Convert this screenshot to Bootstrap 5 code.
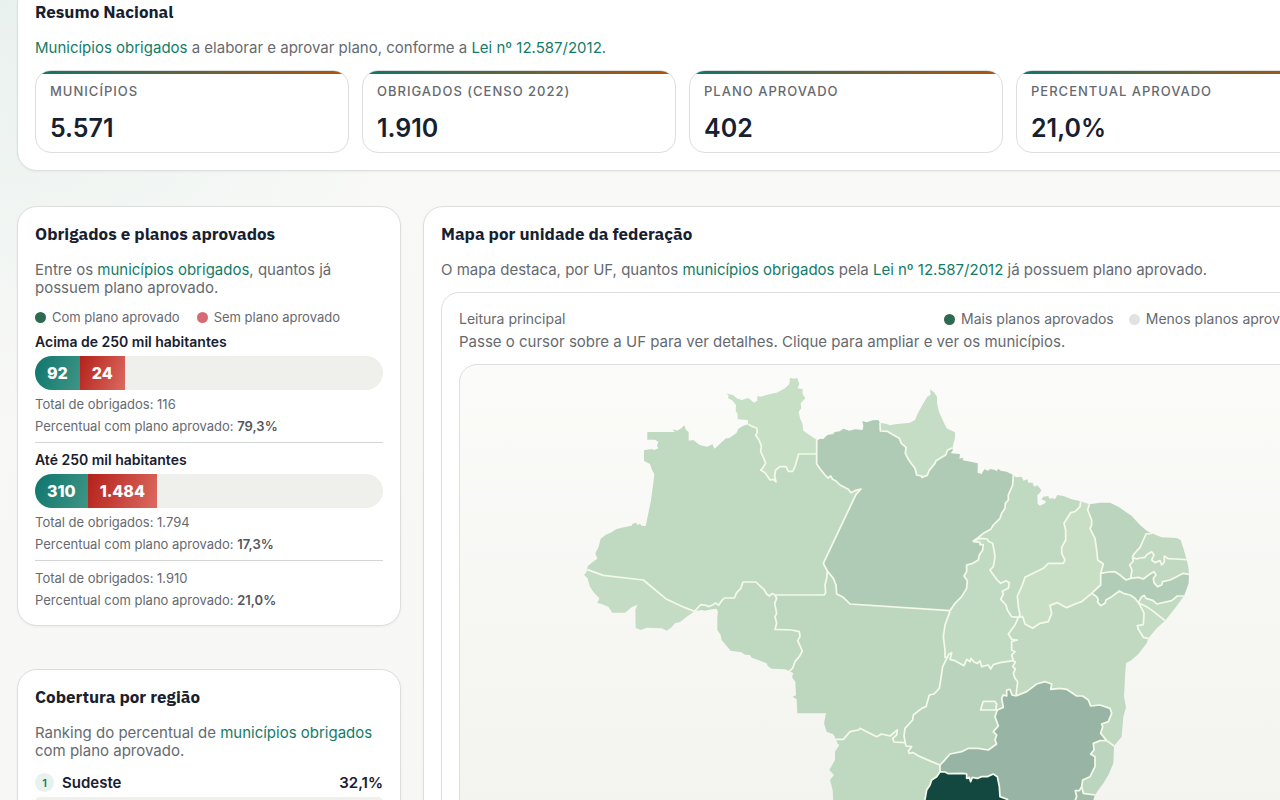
<!DOCTYPE html>
<html lang="pt-BR">
<head>
<meta charset="utf-8">
<meta name="viewport" content="width=device-width, initial-scale=1">
<title>Resumo Nacional</title>
<link href="https://cdn.jsdelivr.net/npm/bootstrap@5.3.0/dist/css/bootstrap.min.css" rel="stylesheet">
<style>
  :root { --ink: #17202f; --soft: #666a70; --brand: #137c68; --line: #dcdfde; }
  body {
    font-family: Inter, "Liberation Sans", sans-serif; font-size: 14px; line-height: 18px; color: var(--soft);
    background: radial-gradient(circle at 0 0, #e9f1ee 0, rgba(233,241,238,0) 420px), linear-gradient(#f9faf8, #f7f7f5);
  }
  a { color: var(--brand); text-decoration: none; }
  .page-shell { margin: -16px -68px 0 17px; }
  .panel { background: #fff; border: 1px solid var(--line); border-radius: 20px; padding: 17px; box-shadow: 0 1px 3px rgba(23,32,47,.05); }
  .panel-title { font-family: "IBM Plex Sans", "Noto Sans", sans-serif; font-size: 17px; line-height: 20px; font-weight: 700; color: var(--ink); margin: 0 0 17px; }
  .lead-text { font-size: 15px; line-height: 18px; margin: 0; }
  .stat-grid { display: grid; grid-template-columns: repeat(4, 1fr); gap: 13px; margin-top: 13px; }
  .stat { border: 1px solid var(--line); border-radius: 16px; padding: 11px 14px 9px; position: relative; overflow: hidden; }
  .stat::before { content: ""; position: absolute; inset: 0 0 auto; height: 3px; background: linear-gradient(90deg, #0f766e, #b45309); }
  .stat dt { font-size: 13px; line-height: 18px; font-weight: 500; letter-spacing: 1px; text-transform: uppercase; }
  .stat dd { font-size: 25px; line-height: 30px; font-weight: 600; color: var(--ink); margin: 13px 0 0; }
  .main-grid { display: grid; grid-template-columns: 384px 1fr; gap: 22px; margin-top: 35px; }
  .side-stack { gap: 43px; }
  .dot { width: 11px; height: 11px; border-radius: 50%; flex: none; }
  .dot-yes { background: #2d6a4f; } .dot-no { background: #d56c75; } .dot-few { background: #dfe3e1; }
  .key-list { font-size: 13px; line-height: 18px; gap: 17px; margin: 11px 0 7px; }
  .key-list li { display: flex; align-items: center; gap: 6px; }
  .group-title { font-size: 14px; line-height: 18px; font-weight: 600; color: var(--ink); margin: 0 0 5px; }
  .split-bar { display: flex; height: 34px; border-radius: 17px; overflow: hidden; background: #efefeb; margin-bottom: 3px; }
  .split-bar span { display: flex; align-items: center; padding: 0 12px; color: #fff; font-weight: 800; font-size: 16px; }
  .bar-yes { background: linear-gradient(110deg, #0f766e, #3f9585); }
  .bar-no { background: linear-gradient(110deg, #b3211a, #dc6a60); }
  .fact { font-size: 13px; line-height: 22px; margin: 0; }
  .fact strong { font-weight: 600; color: #54575d; }
  .rule { border-top: 1px solid #d3d6d5; margin-top: 5px; padding-top: 8px; }
  .rule-total { padding-top: 6px; margin-bottom: -3px; }
  .rank-row { font-size: 15px; line-height: 18px; font-weight: 600; color: var(--ink); margin-top: 13px; }
  .rank-no { width: 19px; height: 19px; border-radius: 50%; background: #e7f2ef; color: var(--brand); font-size: 11px; }
  .rank-bar { height: 10px; border-radius: 5px; background: #efefeb; margin-top: 5px; }
  .map-card { border: 1px solid var(--line); border-radius: 18px; padding: 17px; margin-top: 13px; }
  .map-frame { border: 1px solid var(--line); border-radius: 18px; overflow: hidden; margin-top: 13px; background: linear-gradient(#fbfbf9, #f1f1ed 560px); }
  .map-note { font-size: 14px; line-height: 18px; }
  .map-key { gap: 15px; margin: 0; }
  .map-hint { margin: 5px 0 0; }
  #mapa { display: block; width: 100%; }
</style>
</head>
<body>
<main class="vh-100 overflow-hidden">
<div class="d-flex flex-column"><div class="page-shell">

  <section class="panel">
    <h2 class="panel-title">Resumo Nacional</h2>
    <p class="lead-text"><a href="#obrigados">Municípios obrigados</a> a elaborar e aprovar plano, conforme a <a href="#lei">Lei nº 12.587/2012</a>.</p>
    <dl class="stat-grid mb-0">
      <div class="stat"><dt>Municípios</dt><dd>5.571</dd></div>
      <div class="stat"><dt>Obrigados (Censo 2022)</dt><dd>1.910</dd></div>
      <div class="stat"><dt>Plano aprovado</dt><dd>402</dd></div>
      <div class="stat"><dt>Percentual aprovado</dt><dd>21,0%</dd></div>
    </dl>
  </section>

  <div class="main-grid">
    <div class="side-stack d-flex flex-column">
      <section class="panel" id="obrigados">
        <h2 class="panel-title">Obrigados e planos aprovados</h2>
        <p class="lead-text">Entre os <a href="#obrigados">municípios obrigados</a>, quantos já possuem plano aprovado.</p>
        <ul class="key-list list-unstyled d-flex">
          <li><span class="dot dot-yes"></span>Com plano aprovado</li>
          <li><span class="dot dot-no"></span>Sem plano aprovado</li>
        </ul>
        <h3 class="group-title">Acima de 250 mil habitantes</h3>
        <div class="split-bar"><span class="bar-yes">92</span><span class="bar-no">24</span></div>
        <p class="fact">Total de obrigados: 116</p>
        <p class="fact">Percentual com plano aprovado: <strong>79,3%</strong></p>
        <div class="rule">
          <h3 class="group-title">Até 250 mil habitantes</h3>
          <div class="split-bar"><span class="bar-yes">310</span><span class="bar-no">1.484</span></div>
          <p class="fact">Total de obrigados: 1.794</p>
          <p class="fact">Percentual com plano aprovado: <strong>17,3%</strong></p>
        </div>
        <div class="rule rule-total">
          <p class="fact">Total de obrigados: 1.910</p>
          <p class="fact">Percentual com plano aprovado: <strong>21,0%</strong></p>
        </div>
      </section>

      <section class="panel flex-grow-1">
        <h2 class="panel-title">Cobertura por região</h2>
        <p class="lead-text">Ranking do percentual de <a href="#obrigados">municípios obrigados</a> com plano aprovado.</p>
        <div class="rank-row d-flex align-items-center gap-2">
          <span class="rank-no d-flex align-items-center justify-content-center">1</span>
          <span>Sudeste</span><span class="ms-auto">32,1%</span>
        </div>
        <div class="rank-bar"></div>
      </section>
    </div>

    <section class="panel">
      <h2 class="panel-title">Mapa por unidade da federação</h2>
      <p class="lead-text">O mapa destaca, por UF, quantos <a href="#obrigados">municípios obrigados</a> pela <a href="#lei">Lei nº 12.587/2012</a> já possuem plano aprovado.</p>
      <div class="map-card" id="lei">
        <div class="d-flex justify-content-between">
          <span class="map-note">Leitura principal</span>
          <ul class="key-list map-note map-key list-unstyled d-flex">
            <li><span class="dot dot-yes"></span>Mais planos aprovados</li>
            <li><span class="dot dot-few"></span>Menos planos aprovados</li>
          </ul>
        </div>
        <p class="lead-text map-hint">Passe o cursor sobre a UF para ver detalhes. Clique para ampliar e ver os municípios.</p>
        <div class="map-frame">
          <svg id="mapa" viewBox="1380 1095 2553 2100" role="img" aria-label="Mapa do Brasil por unidade da federação">
            <g id="ufs"></g>
            <path id="divisas" fill="none" stroke="#f4f9ea" stroke-width="5.2" stroke-linejoin="round"/>
          </svg>
        </div>
      </div>
    </section>
  </div>
</div></div>
</main>

<script src="https://cdn.jsdelivr.net/npm/bootstrap@5.3.0/dist/js/bootstrap.bundle.min.js"></script>
<script>
  // Boundary arcs, shared by neighbouring states. Points are relative to the origin of their tile.
  const tiles = { A: [1710, 1110], B: [2400, 1110], C: [2940, 1380], D: [2100, 1740], E: [2700, 1800] };
  // Names that start with "x" are outer edges and get no border line.
  const arcs = {
    xAM: 'A 535,163 520,167 505,176 500,188 488,197 478,204 468,205 458,214 443,228 433,236 427,222 413,230 400,228 388,224 370,210 356,212 356,186 348,180 343,166 335,174 322,182 307,177 315,186 232,186 232,209 255,209 265,216 261,228 265,235 253,240 245,237 222,241 222,273 240,282 246,300 253,312 250,340 243,390 235,430 227,468 215,467 210,462 200,465 200,458 188,461 185,467 155,473 138,478 125,487 108,494 92,506 86,530 76,550 82,566 68,576 54,588 50,598',
    AM_AC: 'A 50,598 100,616 220,630 290,688 345,713 374,724',
    xAC: 'A 50,598 50,606 42,614 52,624 60,650 72,668 88,685 82,699 95,702 115,710 127,728 165,728 185,712 202,704 196,720 197,774 212,780 230,773 275,775 290,782 305,772 315,760 330,756 350,740 374,724',
    AM_RO: 'A 374,724 388,708 393,704 408,706 415,710 428,705 437,699 446,706 455,692 463,684 493,684 500,668 512,656 519,636 558,636 570,648 582,658 590,672 598,678 606,671 615,675',
    AM_MT: 'A 615,675 762,675 767,668 765,645 770,625 772,603',
    AM_PA: 'B 82,603 70,580 168,373 183,357 165,362 153,368 145,358 120,345 108,333 98,328 92,318 84,324 75,315 60,296 50,282 50,252',
    RR_AM: 'A 535,163 548,170 560,174 562,188 557,195 567,210 574,228 572,244 580,262 587,280 578,294 572,300 585,308 600,330 610,328 618,336 614,318 617,300 630,290 648,290 655,304 668,304 675,290 686,252 740,252',
    xRR: 'A 535,163 533,150 503,148 503,132 497,122 498,105 488,92 474,84 476,76 468,70 490,76 500,85 515,90 535,84 552,98 562,92 562,78 572,80 600,72 620,68 645,55 658,42 660,24 672,26 682,24 688,42 683,55 698,58 698,72 706,85 692,100 694,115 686,125 690,145 697,160 700,182 715,193 735,206 740,206',
    RR_PA: 'A 740,206 740,252',
    xPA1: 'B 50,212 60,206 70,207 82,195 100,192 104,186 120,184 130,176 148,182 165,178 188,180 190,168 187,153 200,157 218,151 235,150 240,158',
    AP_PA: 'B 240,158 241,183 262,184 275,192 298,205 304,220 318,232 316,250 325,268 335,282 345,295 350,315 365,318 365,322 382,316 387,302 405,280 408,272 425,262 437,255 443,240 458,233',
    xAP: 'B 240,158 260,162 270,166 285,163 330,158 345,150 352,133 370,100 382,80 392,74 390,58 403,68 411,80 411,100 417,125 428,150 440,175 465,187 465,205 460,222 458,233',
    xPA2: 'B 458,233 458,242 452,250 480,252 478,266 490,263 488,271 505,274 533,280 533,308 545,312 553,298 565,302 570,297 585,300 590,304 595,296 602,302 620,305 640,315',
    PA_MA: 'B 640,315 638,345 625,375 625,390 616,400 615,415 605,430 600,445 580,465 572,478 550,490 535,502 518,514',
    PA_TO: 'B 518,514 540,517 540,524 550,524 548,540 538,555 535,570 518,580 500,585 500,605 492,618 502,632 500,655 485,680 465,700 450,722',
    MA_TO: 'B 518,514 540,505 562,507 565,514 578,520 582,540 585,560 580,590 570,600 578,612 590,628 602,640 618,632 628,638 625,655 607,664 610,672 602,688 618,705 622,720 635,740 655,742',
    PA_MT: 'B 82,603 100,625 108,645 110,672 130,682 150,702 450,722',
    xMA: 'C 100,45 108,52 125,50 130,62 142,58 145,68 158,68 162,80 172,76 184,90 180,98 172,105 173,132 180,137 195,130 198,124 184,118 190,110 205,108 208,116 220,115 225,118 232,105 250,108 275,118 302,124',
    MA_PI: 'C 302,124 300,140 285,155 272,158 252,190 257,210 257,240 245,262 245,280 255,300 250,310 205,310 190,325 135,352 125,380 112,408 115,440 120,465 115,472',
    xPI: 'C 302,124 328,133',
    PI_CE: 'C 328,133 323,150 335,180 335,195 330,205 345,235 350,270 353,300 370,312 362,340',
    xCE: 'C 328,133 360,128 390,128 415,140 455,168 480,195 500,212 515,220',
    CE_RN: 'C 515,220 498,222 490,240 480,262 462,282 457,292',
    CE_PB: 'C 457,292 460,303 449,315 456,330 452,355',
    CE_PE: 'C 362,340 385,336 405,335 420,345 438,360 452,355',
    xRN: 'C 515,220 545,232 590,234 602,240 610,265 620,299',
    RN_PB: 'C 457,292 470,297 480,294 495,292 500,284 515,275 522,285 515,300 525,308 540,302 545,315 553,306 553,288 565,296 585,297 620,299',
    xPB: 'C 620,299 625,320 627,343',
    PB_PE: 'C 452,355 475,352 490,357 510,342 522,335 528,345 520,355 522,368 532,380 545,375 548,365 570,360 590,350 610,340 627,343',
    xPE: 'C 627,343 626,370 612,408',
    PE_AL: 'C 475,428 485,410 493,406 498,415 520,422 530,432 575,422 592,408 612,408',
    xAL: 'C 612,408 585,445 555,482',
    AL_SE: 'C 475,428 500,440 525,458 555,482',
    xSE: 'C 555,482 530,505 505,535',
    SE_BA: 'C 475,428 485,445 492,460 490,494 472,497 475,508 490,532 505,535',
    PE_BA: 'C 335,400 350,410 355,420 352,425 362,437 375,430 378,420 395,410 418,393 430,400 450,405 465,415 475,428',
    PI_PE: 'C 362,340 362,375 335,400',
    PI_BA: 'C 335,400 305,425 285,432 260,443 232,428 210,436 215,460 205,485 180,490 158,505 135,492 128,470 115,472',
    xBA: 'E 745,115 740,130 715,162 695,180 678,190 675,230 672,290 678,322 670,350 665,410 642,438',
    TO_BA: 'E 355,52 345,75 325,102 335,118 352,120 335,124 335,150 345,155 335,165 340,182',
    GO_BA: 'E 340,182 346,186 338,200 346,207 340,220 345,235 353,245 350,270 348,288',
    TO_GO: 'E 142,172 147,162 155,158 150,178 165,182 192,197 200,178 210,185 213,175 222,186 232,190 240,183 245,200 265,195 272,207 280,194 300,188 340,182',
    MT_TO: 'E 150,34 135,75 130,110 135,150 135,172 142,172',
    MT_GO: 'E 142,172 128,200 122,240 118,265 102,282 88,285 78,320 65,325 40,345 38,360 15,385 12,408 16,428',
    MT_MS: 'D 408,478 430,478 450,455 475,450 480,445 530,470 545,462 570,468 592,450 590,465 578,475 582,486 616,488',
    MS_GO: 'E 16,428 18,438 35,440 25,454 28,460 40,458 60,470 95,485 120,495',
    GO_MG: 'E 120,495 130,485 150,462 185,455 205,445 235,445 265,450 290,432 285,420 290,405 280,395 295,378 285,350 292,330 310,322 305,295 310,285 320,288 320,270 330,268 336,285 348,288',
    DF: 'E 250,304 284,304 290,312 287,330 242,330 245,318 250,304',
    BA_MG: 'E 348,288 380,275 410,252 435,245 455,252 452,268 480,265 500,268 530,288 548,288 565,300 572,318 600,315 630,325 635,340 625,365 605,372 608,380 602,400 620,422',
    MG_ES: 'E 620,422 600,422 580,430 582,450 572,462 585,470 585,500 570,530 548,540 545,560',
    BA_ES: 'E 620,422 642,438',
    xES: 'E 642,438 640,490 625,525 610,550 595,570 585,585',
    ES_RJ: 'E 545,560 550,580 585,585',
    MG_RJ: 'E 545,560 538,572 526,572 530,590 520,615',
    xRJ: 'E 585,585 575,615',
    MG_SP: 'E 120,515 135,516 145,521 190,520 200,522 200,535 208,532 212,545 217,532 232,535 245,530 262,530 280,522 292,530 298,560 300,590 322,598 330,615',
    MS_MG: 'E 120,495 120,515',
    MS_SP: 'E 120,515 110,530 95,540 90,555 80,570 72,615',
    MT_RO: 'D 225,45 230,55 224,70 230,100 225,110 230,130 225,148 275,150 298,155 300,170 293,182 307,213 298,230 285,245 278,265 268,273',
    xRO: 'D -16,94 5,90 15,92 35,88 50,86 54,96 52,110 52,150 62,165 65,180 80,198 92,212 125,217 135,224 150,225 155,233 175,240 200,250 203,258 215,266 255,268 268,273',
    xMT: 'D 268,273 280,280 276,292 286,305 288,346 278,350 290,358 292,400 378,400 372,430 380,455 400,463 408,478',
    xMS: 'D 408,478 412,490 418,495 405,515 405,540 388,570 402,585 390,600 398,630 400,670'
  };
  // Each state: fill and ring of arcs; "-" reverses an arc.
  const states = {
    AM: ['#c0d9c1', 'xAM AM_AC AM_RO AM_MT AM_PA -RR_AM'],
    AC: ['#c5dcc4', 'xAC -AM_AC'],
    RR: ['#c7dfc5', 'xRR RR_PA -RR_AM'],
    RO: ['#bfd8c0', 'AM_RO MT_RO -xRO'],
    PA: ['#afcbb6', 'xPA1 AP_PA xPA2 PA_MA PA_TO -PA_MT AM_PA'],
    AP: ['#c5ddc4', 'xAP -AP_PA'],
    MT: ['#bdd7be', 'AM_MT PA_MT MT_TO MT_GO -MT_MS -xMT -MT_RO'],
    TO: ['#c1dac2', 'MA_TO TO_BA -TO_GO -MT_TO -PA_TO'],
    MA: ['#c0d9c1', 'xMA MA_PI -MA_TO -PA_MA'],
    PI: ['#c8dfc6', 'xPI PI_CE PI_PE PI_BA -MA_PI'],
    CE: ['#bbd4bd', 'xCE CE_RN CE_PB -CE_PE -PI_CE'],
    RN: ['#c1d9c1', 'xRN -RN_PB -CE_RN'],
    PB: ['#c1d9c1', 'RN_PB xPB -PB_PE -CE_PB'],
    PE: ['#b2cdb7', 'CE_PE PB_PE xPE -PE_AL -PE_BA -PI_PE'],
    AL: ['#c2dac2', 'PE_AL xAL -AL_SE'],
    SE: ['#c4dcc3', 'AL_SE xSE -SE_BA'],
    BA: ['#c0d9c0', '-PI_BA PE_BA SE_BA xBA -BA_ES -BA_MG -GO_BA -TO_BA'],
    GO: ['#bad3bd', 'TO_GO GO_BA -GO_MG -MS_GO -MT_GO'],
    MG: ['#98b4a4', 'GO_MG BA_MG MG_ES MG_RJ -MG_SP -MS_MG'],
    ES: ['#bcd5be', 'BA_ES xES -ES_RJ -MG_ES'],
    RJ: ['#a0bcab', 'ES_RJ xRJ -MG_RJ'],
    SP: ['#134840', 'MG_SP -MS_SP'],
    MS: ['#bfd9c0', 'MT_MS MS_GO MS_MG MS_SP -xMS'],
    DF: ['#c0d9c0', 'DF']
  };
  const points = name => {
    const [tile, ...pairs] = arcs[name].split(' ');
    return pairs.map(p => p.split(',').map((v, i) => +v + tiles[tile][i]));
  };
  const ring = list => list.split(' ').flatMap(n => n[0] === '-' ? points(n.slice(1)).reverse() : points(n));
  const NS = 'http://www.w3.org/2000/svg';
  for (const [uf, [fill, list]] of Object.entries(states)) {
    const path = document.createElementNS(NS, 'path');
    path.setAttribute('d', 'M' + ring(list).join('L') + 'Z');
    path.setAttribute('fill', fill);
    path.dataset.uf = uf;
    document.getElementById('ufs').append(path);
  }
  document.getElementById('divisas').setAttribute('d',
    Object.keys(arcs).filter(n => n[0] !== 'x').map(n => 'M' + points(n).join('L')).join(''));
</script>
</body>
</html>
